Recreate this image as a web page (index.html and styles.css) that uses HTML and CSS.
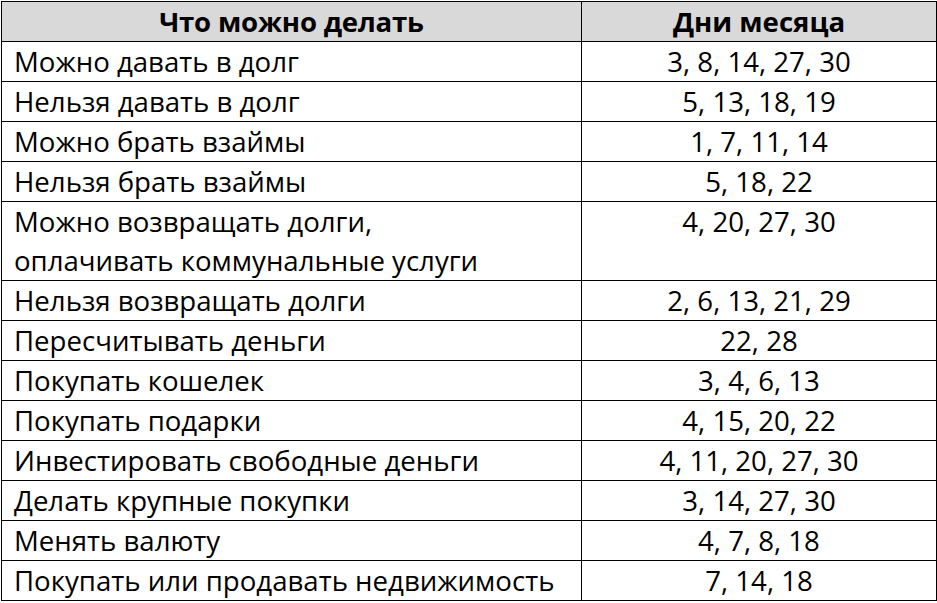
FILE: index.html
```html
<!DOCTYPE html>
<html lang="ru">
<head>
<meta charset="utf-8">
<link rel="stylesheet" href="styles.css">
</head>
<body>
<table class="tbl">
  <colgroup><col class="c1"><col class="c2"></colgroup>
  <thead>
    <tr><th>Что можно делать</th><th>Дни месяца</th></tr>
  </thead>
  <tbody>
    <tr><td>Можно давать в долг</td><td>3, 8, 14, 27, 30</td></tr>
    <tr><td>Нельзя давать в долг</td><td>5, 13, 18, 19</td></tr>
    <tr><td>Можно брать взаймы</td><td>1, 7, 11, 14</td></tr>
    <tr><td>Нельзя брать взаймы</td><td>5, 18, 22</td></tr>
    <tr><td>Можно возвращать долги,<br>оплачивать коммунальные услуги</td><td>4, 20, 27, 30</td></tr>
    <tr><td>Нельзя возвращать долги</td><td>2, 6, 13, 21, 29</td></tr>
    <tr><td>Пересчитывать деньги</td><td>22, 28</td></tr>
    <tr><td>Покупать кошелек</td><td>3, 4, 6, 13</td></tr>
    <tr><td>Покупать подарки</td><td>4, 15, 20, 22</td></tr>
    <tr><td>Инвестировать свободные деньги</td><td>4, 11, 20, 27, 30</td></tr>
    <tr><td>Делать крупные покупки</td><td>3, 14, 27, 30</td></tr>
    <tr><td>Менять валюту</td><td>4, 7, 8, 18</td></tr>
    <tr><td>Покупать или продавать недвижимость</td><td>7, 14, 18</td></tr>
  </tbody>
</table>
</body>
</html>
```
FILE: styles.css
```css
html, body { margin: 0; padding: 0; background: #fff; }
body { padding: 1px 0 0 1px; }
.tbl {
  border-collapse: collapse;
  table-layout: fixed;
  width: 935px;
  font-family: "Open Sans", "Noto Sans", sans-serif;
  font-size: 27.6px;
  color: #000;
}
.c1 { width: 580px; }
.c2 { width: 355px; }
.tbl th, .tbl td {
  border: 1px solid #000;
  padding: 0 0 0 12px;
  line-height: 39px;
  vertical-align: top;
  white-space: nowrap;
}
.tbl th {
  background: #d9d9d9;
  font-weight: 700;
  text-align: center;
  padding: 0;
}
.tbl th:first-child { letter-spacing: -0.2px; }
.tbl td + td { text-align: center; padding: 0; }
```
